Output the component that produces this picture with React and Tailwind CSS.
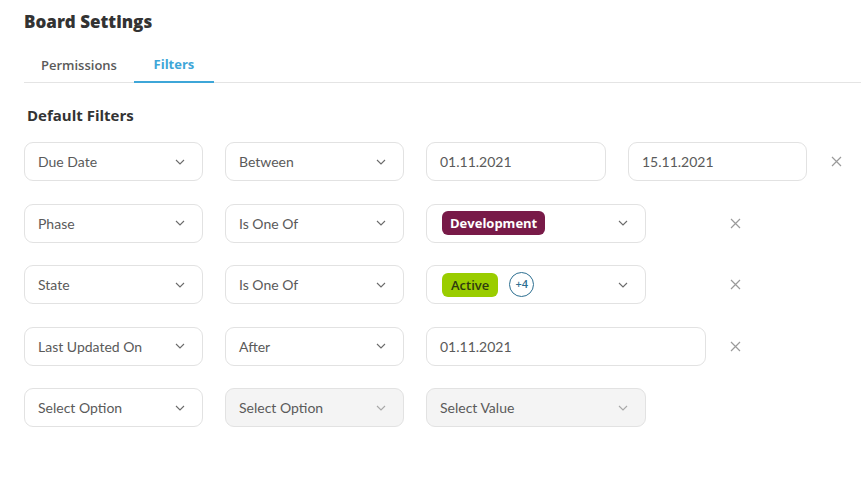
const Chevron = ({ light }) => (
  <svg
    width="10"
    height="6"
    viewBox="0 0 10 6"
    fill="none"
    className={`shrink-0 ${light ? "text-[#a8a8a8]" : "text-[#6b6b6b]"}`}
  >
    <path d="M1 1l4 4 4-4" stroke="currentColor" strokeWidth="1.1" />
  </svg>
);

const Close = () => (
  <button className="flex h-[39px] w-[14px] shrink-0 items-center justify-center text-[#9a9a9a]">
    <svg width="11" height="11" viewBox="0 0 11 11" fill="none">
      <path d="M1 1l9 9M10 1l-9 9" stroke="currentColor" strokeWidth="1.2" />
    </svg>
  </button>
);

const Select = ({ label, disabled, width = "w-[179px]", children }) => (
  <div
    className={`flex h-[39px] ${width} shrink-0 items-center justify-between rounded-[9px] border border-[#e2e2e2] ${
      children ? "pl-[15px]" : "pl-[13px]"
    } pr-[17px] ${disabled ? "bg-[#f4f4f4]" : "bg-white"}`}
  >
    {children ?? <span className="text-[14px] text-[#5a5a5a]">{label}</span>}
    <Chevron light={disabled} />
  </div>
);

const DateInput = ({ value, width = "w-[180px]" }) => (
  <div
    className={`flex h-[39px] ${width} shrink-0 items-center rounded-[9px] border border-[#e2e2e2] bg-white px-[13px] text-[14px] text-[#5a5a5a]`}
  >
    {value}
  </div>
);

const Row = ({ children }) => (
  <div className="flex items-center gap-[22px]">{children}</div>
);

const heading = { fontFamily: "'Open Sans', 'Noto Sans', sans-serif" };

export default function App() {
  return (
    <div
      className="min-h-[477px] bg-white pt-[11px] text-[#333]"
      style={{ fontFamily: "Lato, 'Noto Sans', sans-serif" }}
    >
      <h1
        className="pl-[24px] text-[17px] font-extrabold leading-[22px] text-[#333]"
        style={heading}
      >
        Board Settings
      </h1>

      <div className="ml-[24px] mt-[20px] flex border-b border-[#e4e4e4]" style={heading}>
        <button className="h-[29px] px-[17px] pb-[4px] text-[13px] font-semibold text-[#5a5a5a]">
          Permissions
        </button>
        <button className="-mb-px h-[30px] w-[80px] border-b-2 border-[#3ea6d8] pb-[4px] text-[13px] font-bold text-[#3ea6d8]">
          Filters
        </button>
      </div>

      <h2
        className="mt-[22px] pl-[27px] text-[15px] font-bold leading-[20px] text-[#333]"
        style={heading}
      >
        Default Filters
      </h2>

      <div className="mt-[17px] flex flex-col gap-[22.5px] pl-[24px]">
        <Row>
          <Select label="Due Date" />
          <Select label="Between" />
          <DateInput value="01.11.2021" />
          <DateInput value="15.11.2021" width="w-[179px]" />
          <Close />
        </Row>

        <Row>
          <Select label="Phase" />
          <Select label="Is One Of" />
          <div className="flex w-[280px] shrink-0 items-center">
            <Select width="w-[220px]">
              <span
                className="rounded-[6px] bg-[#781a48] px-[8px] py-[3px] text-[13px] font-bold leading-[18px] text-white"
                style={heading}
              >
                Development
              </span>
            </Select>
          </div>
          <Close />
        </Row>

        <Row>
          <Select label="State" />
          <Select label="Is One Of" />
          <div className="flex w-[280px] shrink-0 items-center">
            <Select width="w-[220px]">
              <div className="flex items-center gap-[11px]" style={heading}>
                <span className="rounded-[6px] bg-[#9acd00] px-[9px] py-[3px] text-[13px] font-semibold leading-[18px] text-[#2e3a10]">
                  Active
                </span>
                <span className="flex h-[25px] w-[25px] items-center justify-center rounded-full border border-[#2d6f91] text-[11px] font-semibold text-[#2d6f91]">
                  +4
                </span>
              </div>
            </Select>
          </div>
          <Close />
        </Row>

        <Row>
          <Select label="Last Updated On" />
          <Select label="After" />
          <DateInput value="01.11.2021" width="w-[280px]" />
          <Close />
        </Row>

        <Row>
          <Select label="Select Option" />
          <Select label="Select Option" disabled />
          <Select label="Select Value" disabled width="w-[220px]" />
        </Row>
      </div>
    </div>
  );
}
